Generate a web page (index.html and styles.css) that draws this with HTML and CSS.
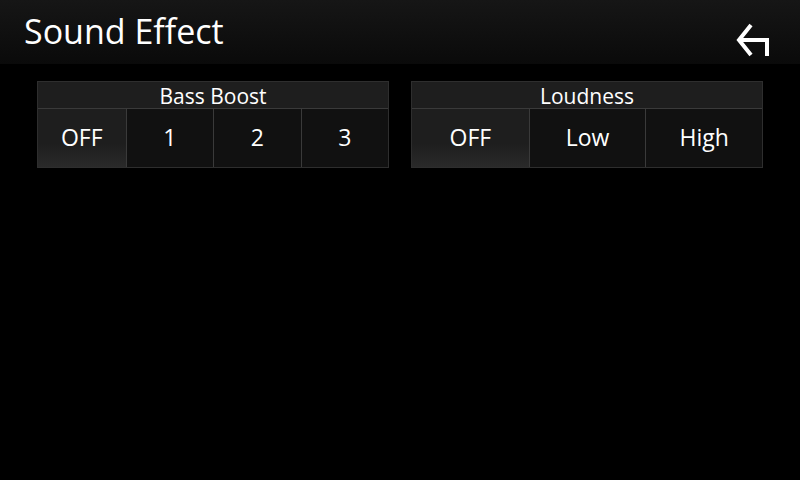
FILE: index.html
```html
<!DOCTYPE html>
<html lang="en">
<head>
    <meta charset="UTF-8">
    <title>Sound Effect</title>
    <link rel="stylesheet" href="styles.css">
</head>
<body>
    <div class="header">
        <h1>Sound Effect</h1>
        <button class="back">
            <svg width="40" height="40" viewBox="0 0 40 40">
                <path d="M15 6 L3 21 L15 36 M3 21 H31 V37" fill="none" stroke="#fff" stroke-width="4" stroke-linejoin="miter"/>
            </svg>
        </button>
    </div>
    <div class="content">
        <div class="panel">
            <div class="label">Bass Boost</div>
            <div class="options four">
                <div class="opt active">OFF</div>
                <div class="opt">1</div>
                <div class="opt">2</div>
                <div class="opt">3</div>
            </div>
        </div>
        <div class="panel">
            <div class="label">Loudness</div>
            <div class="options three">
                <div class="opt active">OFF</div>
                <div class="opt">Low</div>
                <div class="opt">High</div>
            </div>
        </div>
    </div>
</body>
</html>
```

FILE: styles.css
```css
body {
    margin: 0;
    background: #000;
    font-family: "Open Sans", "DejaVu Sans", sans-serif;
    color: #fff;
    width: 800px;
    height: 480px;
    overflow: hidden;
}
.header {
    height: 64px;
    background: linear-gradient(#161616, #0a0a0a);
    display: flex;
    align-items: center;
    justify-content: space-between;
    padding: 0 24px 0 24px;
}
.header h1 {
    margin: 0;
    font-size: 34px;
    font-weight: normal;
    margin-top: -2px;
}
.back {
    background: none;
    border: none;
    padding: 0;
    width: 40px;
    height: 40px;
    margin-top: 14px;
}
.back svg {
    display: block;
}
.content {
    display: flex;
    gap: 22px;
    padding: 17px 37px;
}
.panel {
    width: 350px;
    border: 1px solid #2e2e2e;
    background: #1c1c1c;
}
.label {
    height: 26px;
    line-height: 28px;
    text-align: center;
    font-size: 21px;
    background: #1e1e1e;
    border-bottom: 1px solid #3a3a3a;
}
.options {
    display: grid;
    height: 58px;
}
.four {
    grid-template-columns: repeat(4, 1fr);
}
.three {
    grid-template-columns: repeat(3, 1fr);
}
.opt {
    display: flex;
    align-items: center;
    justify-content: center;
    font-size: 23px;
    background: #111;
    border-left: 1px solid #3a3a3a;
    padding-bottom: 2px;
}
.opt:first-child {
    border-left: none;
}
.opt.active {
    background: linear-gradient(#1e1e1e 60%, #2a2a2a);
}
```
